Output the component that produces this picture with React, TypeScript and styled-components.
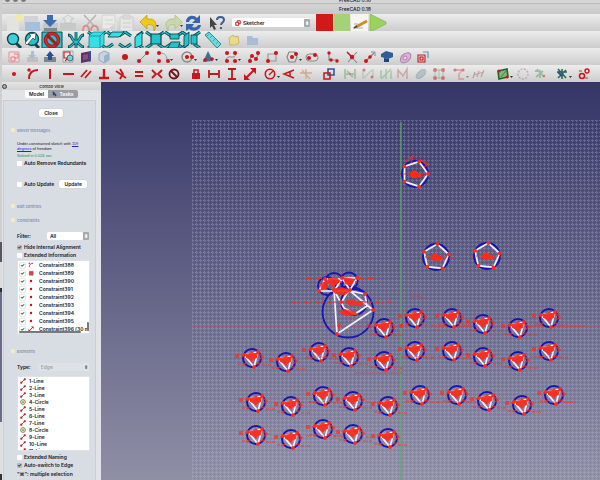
import React from "react";
import styled, { createGlobalStyle } from "styled-components";

const GlobalStyle = createGlobalStyle`
  * { box-sizing: border-box; }
  html, body, #root { height: 100%; margin: 0; }
  body { font-family: Inter, "Liberation Sans", sans-serif; font-size: 5px; font-weight: 600; color: #16181c; overflow: hidden; }
  button, select, input { font: inherit; color: inherit; }
`;

const Desktop = styled.div`
  display: flex;
  height: 100%;
  padding-left: 2px;
  background: linear-gradient(#cfcfcf 0 242px, #55565e 242px 262px, #dcdcdc 262px 288px, #2b2c33 288px 292px, #6a6a8c 292px 422px, #dedede 422px 474px, #333 474px);
`;
const Window = styled.div`
  flex: 1;
  min-width: 0;
  display: flex;
  flex-direction: column;
`;
const BackTitle = styled.div`
  height: 4px;
  display: flex;
  justify-content: center;
  align-items: flex-end;
  position: relative;
  overflow: hidden;
  background: #d6d6d6;
  border-bottom: 1px solid #b9b9b9;
  line-height: 6px;
  padding-left: 108px;
  font-weight: 500;
`;
const Lights = styled.div`
  position: absolute;
  left: 3px;
  top: -3px;
  display: flex;
  gap: 3px;
`;
const Light = styled.span`
  width: 5px;
  height: 5px;
  border-radius: 50%;
  background: #77797b;
`;
const TitleBar = styled.header`
  height: 10px;
  display: flex;
  justify-content: center;
  align-items: center;
  padding-left: 108px;
  background: linear-gradient(#d4d4d4, #c9c9c9);
  font-weight: 500;
`;
const Toolbar = styled.div`
  height: 17px;
  flex: none;
  display: flex;
  align-items: center;
  padding-left: 4px;
  overflow: hidden;
  background: linear-gradient(#ececec, #cdcdcd);
`;
const Tool = styled.button<{ $gap: number; $faded?: boolean }>`
  flex: none;
  width: 16px;
  height: 16px;
  margin: 0 0 0 ${(p) => p.$gap}px;
  padding: 0;
  border: 0;
  background: none;
  opacity: ${(p) => (p.$faded ? 0.5 : 1)};
  svg { display: block; overflow: visible; }
`;
const WorkbenchSelect = styled.label`
  display: flex;
  align-items: center;
  gap: 1px;
  width: 78px;
  height: 9px;
  margin-left: 7px;
  padding-left: 3px;
  background: #fff;
  border-radius: 2px;
  select { padding: 0 1px; }
`;
const Select = styled.select<{ $muted?: boolean }>`
  appearance: none;
  flex: 1;
  min-width: 0;
  height: 8px;
  padding: 0 3px;
  border: 0;
  border-radius: 2px;
  background: ${(p) => (p.$muted ? "#e1e4e8" : "#fff")};
  color: ${(p) => (p.$muted ? "#8b8e93" : "#16181c")};
`;
const Stepper = styled.span<{ $muted?: boolean }>`
  display: flex;
  align-items: center;
  justify-content: center;
  width: 6px;
  height: 8px;
  border-radius: 1px;
  background: ${(p) => (p.$muted ? "#e1e4e8" : "#a5a8ad")};
  color: ${(p) => (p.$muted ? "#777" : "#fff")};
`;
const Body = styled.div`
  flex: 1;
  min-height: 0;
  display: flex;
`;
const Dock = styled.aside`
  width: 99px;
  flex: none;
  display: flex;
  flex-direction: column;
  background: #e1e3e6;
`;
const DockTitle = styled.div`
  height: 8px;
  display: grid;
  grid-template-columns: 7px 1fr 7px;
  align-items: center;
  text-align: center;
  background: linear-gradient(#e4e4e4, #d2d2d2);
  color: #3a3b3e;
  font-size: 4px;
`;
const DockClose = styled.button`
  width: 5px;
  height: 5px;
  padding: 0;
  border: 1px solid #3d3e42;
  border-radius: 50%;
  background: #aaa;
`;
const Tabs = styled.div`
  display: flex;
  justify-content: center;
  height: 10px;
`;
const Tab = styled.button<{ $active?: boolean }>`
  display: flex;
  align-items: center;
  justify-content: center;
  gap: 2px;
  width: ${(p) => (p.$active ? 30 : 23)}px;
  height: 8px;
  padding: 0;
  border: 0;
  border-radius: ${(p) => (p.$active ? "0 2px 2px 0" : "2px 0 0 2px")};
  background: ${(p) => (p.$active ? "#9a9da3" : "#fff")};
  color: ${(p) => (p.$active ? "#fff" : "#16181c")};
`;
const Tasks = styled.section`
  flex: 1;
  min-height: 0;
  margin: 0 5px 0 1px;
  padding: 8px 4px 0 7px;
  border: 1px solid #c9cdd4;
  border-bottom: 0;
  background: #d8dce3;
  overflow: hidden;
`;
const Push = styled.button<{ $wide?: boolean }>`
  display: block;
  width: ${(p) => (p.$wide ? 28 : 24)}px;
  height: 8px;
  padding: 0;
  border: 0;
  border-radius: 2px;
  background: #fff;
  box-shadow: 0 0 1px #aaa;
  line-height: 8px;
`;
const Centered = styled.div`
  display: flex;
  justify-content: center;
`;
const Heading = styled.h2<{ $top: number }>`
  display: flex;
  align-items: center;
  gap: 1px;
  height: 6px;
  margin: ${(p) => p.$top}px 0 0;
  color: #8492b5;
  font-size: 4px;
  font-weight: 600;
  &::before {
    content: "";
    width: 4px;
    height: 4px;
    margin-right: 1px;
    border-radius: 1px;
    background: #f1ecc4;
  }
`;
const Group = styled.div<{ $top: number }>`
  margin: ${(p) => p.$top}px 0 0 6px;
`;
const Message = styled.p`
  margin: 0;
  font-family: "Liberation Sans", sans-serif;
  font-size: 4px;
  font-weight: 400;
  line-height: 5px;
  a { color: #2222e0; }
`;
const Solved = styled(Message)`
  margin-top: 2px;
  color: #239036;
`;
const Line = styled.div<{ $top?: number }>`
  display: flex;
  align-items: center;
  gap: 5px;
  height: 8px;
  margin-top: ${(p) => p.$top ?? 0}px;
`;
const Check = styled.label`
  display: flex;
  align-items: center;
  gap: 2px;
  height: 8px;
  white-space: nowrap;
`;
const Tick = styled.input`
  appearance: none;
  flex: none;
  display: grid;
  place-items: center;
  width: 5px;
  height: 5px;
  margin: 0;
  border-radius: 1px;
  background: #fff;
  &:checked { background: #b5b9bf; }
  &:checked::after { content: "✓"; font-size: 5px; line-height: 5px; }
`;
const ListTick = styled(Tick)`
  &:checked { background: #fff; }
  outline: 1px solid #e4e4e6;
`;
const FieldLabel = styled.label<{ $gap: number }>`
  display: flex;
  align-items: center;
  width: 72px;
  gap: ${(p) => p.$gap}px;
`;
const SelectBox = styled.span`
  flex: 1;
  display: flex;
  min-width: 0;
`;
const List = styled.ul<{ $height: number; $top: number }>`
  position: relative;
  width: 73px;
  height: ${(p) => p.$height}px;
  margin: ${(p) => p.$top}px 0 0;
  padding: 0;
  list-style: none;
  overflow: hidden;
  background: #fff;
  border: 1px solid #e0e1e4;
`;
const ConstraintRow = styled.li`
  display: grid;
  grid-template-columns: 5px 8px 1fr;
  gap: 3px;
  align-items: center;
  height: 8px;
  padding-left: 2px;
  white-space: nowrap;
`;
const ElementRow = styled.li`
  display: flex;
  align-items: center;
  gap: 3px;
  height: 7px;
  padding-left: 2px;
`;
const ScrollThumb = styled.span<{ $vertical?: boolean }>`
  position: absolute;
  border-radius: 1px;
  background: #77797d;
  bottom: ${(p) => (p.$vertical ? 2 : 0)}px;
  ${(p) => (p.$vertical ? "right: 0; width: 2px; height: 9px;" : "left: 1px; width: 62px; height: 2px;")}
`;
const Hint = styled.p`
  margin: 1px 0 0;
  line-height: 8px;
`;
const View = styled.main`
  flex: 1;
  min-width: 0;
  overflow: hidden;
  background: linear-gradient(#353567, #8f8fa6);
  svg { display: block; }
`;

const RED = "#c9151b";
const TEAL = "#22c3cb";
const DARK = "#0b4950";

const Dot = ({ x, y, r = 2 }: { x: number; y: number; r?: number }) => <circle cx={x} cy={y} r={r} fill={RED} />;
const S = ({ d, c = RED, w = 1.6, f = "none" }: { d: string; c?: string; w?: number; f?: string }) => (
  <path d={d} stroke={c} strokeWidth={w} fill={f} />
);
const Cube = ({ face }: { face: number }) => (
  <>
    <S d="M-9 -8L-3 -4M9 -8L3 -4M-9 8L-3 4M9 8L3 4" c={DARK} w={3.2} />
    <S d="M-9 -8L-3 -4M9 -8L3 -4M-9 8L-3 4M9 8L3 4" c={TEAL} w={1.5} />
    {face === 0 && <S d="M-8 -4L-4 -8H7L3 -4V8H-8ZM-8 -4H3L7 -8V4L3 8" c="#128890" w={0.8} f="#35dfe6" />}
    {face === 1 && <S d="M-8 -3L-4 -8H8L3 -3Z" c={DARK} w={0.9} f="#35dfe6" />}
    {face === 2 && <S d="M1 -3L8 -8V5L1 8Z" c={DARK} w={0.9} f="#35dfe6" />}
    {face === 3 && <S d="M-4 -6H6V4H-4Z" c={DARK} w={1.2} f={TEAL} />}
    {face === 4 && <S d="M-6 8L-3 2H6L4 8ZM-4 -6H5V-1H-4Z" c={DARK} w={0.9} f={TEAL} />}
    {face === 5 && <S d="M-7 -4L-2 -8V4L-7 8ZM0 -5H6V4H0Z" c={DARK} w={0.9} f={TEAL} />}
  </>
);

const glyphs: Record<string, React.ReactNode> = {
  new: <><path d="M-7-7H5V8H-7Z" fill="#e3e3e0" /><circle cx="5" cy="-6" r="4" fill="#f1e9a8" /></>,
  open: <><path d="M-8 -7H6V8H-8Z" fill="#d0d3d7" /><path d="M-7 -1H8V8H-7Z" fill="#a5bfdf" /></>,
  save: <><path d="M-7 0H8V8H-7Z" fill="#c3c7c9" /><path d="M-3-8H3V-3H7L0 4L-7-3H-3Z" fill="#3b6db3" /><path d="M-6 5H7V8H-6Z" fill="#7e8b90" /></>,
  print: <><path d="M-8 0H8V7H-8Z" fill="#c7c9c9" /><path d="M-3 0V-4H-6L0-8L6-4H3V0Z" fill="#e4e5e5" stroke="#bbb" strokeWidth=".6" /></>,
  cut: <><S d="M-6-8L4 3M6-8L-4 3" c="#b5b5b5" w={1.5} /><S d="M-7 8C-7 1-1 1-1 8M1 8C1 1 8 1 8 8" c="#d98f8a" w={2} /></>,
  copy: <S d="M-7-8H6V6H-7ZM-4-3H4M-4 1H4M-2 7H8V-2" c="#d3d3d3" w={0.9} f="#eaeae8" />,
  paste: <S d="M-7-6H6V8H-7ZM-4-8H3V-4H-4ZM-4 0H4M-4 4H4" c="#c9c9c9" w={0.9} f="#e6e6e5" />,
  undo: <path d="M-9-1L-2-8V-4C7-5 9 1 5 8C5 2 3 1-2 2V6Z" fill="#edc918" stroke="#ba9a12" strokeWidth=".7" />,
  redo: <path d="M9-1L2-8V-4C-7-5-9 1-5 8C-5 2-3 1 2 2V6Z" fill="#c9d9a5" stroke="#aab88a" strokeWidth=".7" />,
  refresh: <><path d="M-7-1C-7-8 1-9 4-5L7-8V0H-1L2-3C-1-5-3-4-4-1Z" fill="#3566ad" /><path d="M8 2C7 8 0 9-4 6L-7 8V1H1L-1 4C2 5 4 4 5 2Z" fill="#3566ad" /></>,
  help: <><path d="M-7-6L0 2L-3 2L-1 6L-3 7L-5 3L-7 5Z" fill="#444" /><path d="M0-3C0-7 7-7 7-3C7-1 4 0 4 2M4 4V6" fill="none" stroke="#3a5f8d" strokeWidth="2" /></>,
  record: <path d="M-8-9H9V9H-8Z" fill="#d01a1a" />,
  stop: <path d="M-8-9H8V9H-8Z" fill="#a5d278" />,
  edit: <><path d="M-9-9H8V9H-9Z" fill="#f6f5f0" /><S d="M-7 5H3M-6 1H-2" c="#999" w={0.8} /><S d="M-4 4L7-2" c="#c4912e" w={3} /><S d="M-6 5L-3 3" c="#444" w={1.6} /></>,
  play: <path d="M-8-9L8-1V1L-8 9Z" fill="#9ad25e" stroke="#7cae4c" strokeWidth=".6" />,
  zoom: <><S d="M2 3L7 8" c={DARK} w={3} /><circle cx="-1" cy="-1" r="5.5" fill="#3fcfd6" stroke={DARK} strokeWidth="1.4" /></>,
  zoomsel: <><S d="M2 3L7 8" c={DARK} w={3} /><circle cx="0" cy="-1" r="6.5" fill={TEAL} stroke={DARK} strokeWidth="1.4" /><path d="M4-7L3 0L1-2L-5 5L-7 3L-1-4L-3-6Z" fill="#fff" stroke="#222" strokeWidth=".6" /></>,
  drawstyle: <><path d="M-10-8H10V8H-10Z" fill={TEAL} stroke={DARK} /><circle r="6.5" fill="none" stroke="#8e1519" strokeWidth="3.6" /><circle r="6.5" fill="none" stroke="#d3262b" strokeWidth="2.2" /><S d="M-5-5L5 5" c="#a51b20" w={3} /></>,
  iso: <><S d="M0-8V8M-8-5C-3-5-5 1 0 2C5 1 3-5 8-5M-8 7C-4 7-4 3 0 2C4 3 4 7 8 7" c={DARK} w={2.8} /><S d="M0-8V8M-7-5C-3-5-5 1 0 2C5 1 3-5 7-5M-7 7C-4 7-4 3 0 2C4 3 4 7 7 7" c={TEAL} w={1.2} /></>,
  c0: <Cube face={0} />, c1: <Cube face={1} />, c2: <Cube face={2} />, c3: <Cube face={3} />, c4: <Cube face={4} />, c5: <Cube face={5} />,
  ruler: <><path d="M-8-5L-4-8L8 4L4 8Z" fill="#70d8de" stroke="#2a8b90" strokeWidth="1" /><S d="M-4-6L-6-4M-1-4L-3-2M2-1L0 1M5 2L3 4" c="#2a8b90" w={0.7} /></>,
  part: <path d="M-5-2L-1-5L1-3L4-4L5 3L1 5L-4 5Z" fill="#eadc87" stroke="#c9b75d" strokeWidth="1" />,
  folder: <path d="M-5-4H0L1-2H6V5H-5Z" fill="#a9bdd6" />,
  sketch: <><path d="M-5-5H5V5H-5Z" fill="#f0dcdc" stroke="#d99" /><S d="M-3 0H1V4H-3ZM0-3H4V1H0" c="#d98589" w={1} /></>,
  leave: <><path d="M-5 0H6V5H-5Z" fill="#a7abb0" /><path d="M-1-6H2V-2H4L0 2L-4-2H-1Z" fill="#7d9ab5" /></>,
  up: <><path d="M-6 0H6V5H-6Z" fill="#7f858d" /><path d="M-2 3V-1H-4L0-6L4-1H2V3Z" fill="#26508f" /></>,
  view: <><path d="M-5-6H5V5H-5Z" fill="#eee" stroke="#888" strokeWidth=".7" /><S d="M-4-5H2V1H-4ZM0 1L-3 4" w={1.1} /><circle cx="2" cy="1" r="3" fill="#83cbd2" stroke="#1e7e86" /></>,
  section: <><path d="M-5-4L5-6V4L-5 6Z" fill="#5a3270" /><path d="M-3-2L2-3V2L-3 3Z" fill="#8f4c74" /><path d="M3-5L5-6V4L3 5Z" fill="#304f91" /></>,
  map: <><path d="M-5-3L0-6L5-4V3L0 6L-5 3Z" fill="#c8d4e2" stroke="#8a9cb0" strokeWidth=".8" /><path d="M0-1L5-4V3L0 6Z" fill="#9ab2cd" /></>,
  point: <Dot x={0} y={0} r={3} />,
  line: <><S d="M-4 4L4-4" c="#888" w={1} /><Dot x={-4} y={4} /><Dot x={4} y={-4} /></>,
  arc: <><S d="M-3-4C3-4 4 0 4 4" c="#999" w={1} /><Dot x={-4} y={-4} /><Dot x={-4} y={4} /><Dot x={5} y={4} /></>,
  circle: <><circle r="5" fill="none" stroke="#888" strokeWidth="1.4" /><Dot x={0} y={0} /><Dot x={5} y={0} /></>,
  cone: <><path d="M0-6L5 4L-5 5Z" fill="#41718e" /><Dot x={-3} y={3} r={1.8} /><Dot x={4} y={2} r={1.8} /></>,
  bspline: <><S d="M-5 4C-4-5 4 5 5-4" c="#888" w={1} /><Dot x={-4} y={-4} /><Dot x={4} y={-4} /><Dot x={-4} y={4} /><Dot x={4} y={4} /></>,
  poly: <><S d="M-5 4L-2-2L2 2L5-4" c="#888" w={1} /><Dot x={-4} y={4} /><Dot x={-2} y={-1} /><Dot x={2} y={2} /><Dot x={4} y={-4} /></>,
  rect: <><S d="M-4-3H4V4H-4Z" c="#999" w={1.2} /><Dot x={-4} y={4} /><Dot x={4} y={-4} /></>,
  hexagon: <><S d="M-5 0L-3-5H3L5 0L3 5H-3Z" c="#888" w={1.2} /><Dot x={0} y={0} /><Dot x={4} y={-3} /></>,
  slot: <><rect x="-6" y="-3" width="12" height="7" rx="3.5" fill="#ddd" stroke="#888" /><Dot x={-3} y={1} /><Dot x={3} y={-2} /></>,
  fillet: <><S d="M-4-5V3H5" c="#888" w={1.2} /><Dot x={-4} y={-4} r={1.7} /><Dot x={-2} y={3} r={1.8} /><Dot x={4} y={4} r={1.7} /></>,
  trim: <><S d="M-5-5L5 6M5-5L-4 5" c="#888" w={1.1} /><S d="M-5-5L0 0" w={1.4} /><Dot x={0} y={0} r={2.2} /></>,
  extend: <><S d="M-4 4L4-4" c="#888" w={1.2} /><S d="M1-5H5V-1" c="#888" w={1} /><Dot x={-4} y={4} /><Dot x={0} y={0} r={1.8} /></>,
  external: <><path d="M-6-3L-1-6L6-4V0L1 2L-6 0Z" fill="#315e9b" /><path d="M-3 1V5H2V2" fill="#204573" /></>,
  carbon: <><ellipse cx="0" cy="1" rx="6" ry="4" transform="rotate(-40)" fill="#d9b2d5" stroke="#b37caf" strokeWidth="1" /><circle cx="0" cy="1" r="2" fill="#e8d0e5" stroke="#b37caf" /></>,
  construct: <><S d="M-5-2H2V5H-5ZM-3 0H0V3H-3Z" w={1.1} /><S d="M0-5H5V1" c="#6697b5" w={1.2} /></>,
  coinc: <Dot x={0} y={0} r={2} />,
  onobj: <><S d="M-4 5C-4-1-1-4 5-4" w={2} /><Dot x={-4} y={-4} r={1.7} /></>,
  vert: <S d="M0-5V5" w={2} />, horiz: <S d="M-5 0H6" w={2} />,
  par: <S d="M-5 3L1-4M-1 4L5-3" w={1.8} />, perp: <S d="M0-5V4M-5 4H5" w={2.4} />,
  tang: <S d="M-5-3L5 4M-1-5L2 0L-1 5" w={1.9} />, equal: <S d="M-4-2H4M-4 2H4" w={1.9} />,
  symm: <S d="M-5-4L-1 0L-5 4M5-4L1 0L5 4" w={1.9} />,
  block: <><circle r="4.5" fill="none" stroke="#6e1216" strokeWidth="1.8" /><S d="M-3-3L3 3" c="#6e1216" w={1.8} /></>,
  lock: <><path d="M-4-1H4V5H-4Z" fill={RED} /><S d="M-2 0V-4H2V0" w={1.5} /></>,
  hdist: <S d="M-5-4V4M5-4V4M-5 0H5" w={1.8} />, vdist: <S d="M-4-5H4M-4 5H4M0-5V5" w={1.8} />,
  dist: <><S d="M-4 4L4-4" w={2} /><path d="M-6 6V0L0 6ZM6-6V0L0-6Z" fill={RED} /></>,
  radius: <><circle r="4.7" fill="none" stroke={RED} strokeWidth="1.6" /><S d="M-1 1L3-3" w={1.4} /></>,
  angle: <S d="M5-4L-5 0L5 4M1-3V3" w={1.5} />,
  snell: <S d="M-6-1H6M0-5V5M-4-4L4 5" c="#d0aa8c" w={1.3} />,
  toggle: <><path d="M-1-5H5V1H-1Z" fill="none" stroke="#2d579e" strokeWidth="1.6" /><path d="M-5-1H1V5H-5Z" fill="none" stroke={RED} strokeWidth="1.5" /></>,
  g1: <><S d="M-5-5V5M5-5V5M-4 0H4M-3-3L3 3" c="#6fa86b" w={1.8} /><Dot x={0} y={0} r={1} /></>,
  g2: <><S d="M-5-4V5M5-5V3M-4 4L4-4" c="#96ba91" w={1.4} /><Dot x={-4} y={-4} r={1.5} /><Dot x={4} y={3} r={1.5} /></>,
  g3: <S d="M-5 5L5-5M-5-4V4M0-5V5M5-3V5" c="#79b277" w={1.6} />,
  g4: <S d="M-5 4V-4L0 2L4-5V5" c="#b87268" w={1.5} />,
  g5: <ellipse rx="3" ry="6" transform="rotate(48)" fill="#8aa5be" stroke="#708ba1" />,
  g6: <><S d="M-4-4H4V4H-4ZM0-5V5" c="#6ba56b" w={1} /><Dot x={-4} y={-4} /><Dot x={4} y={-4} /><Dot x={-4} y={4} /><Dot x={4} y={4} /></>,
  g7: <><S d="M-5-4H3L0 0V5H5" c="#d9797b" w={1.8} /><Dot x={-4} y={-4} r={1.6} /><Dot x={4} y={-4} r={1.6} /></>,
  g8: <S d="M-6 4L-4-2M-2 3L0-3M2 3L5-4M-5 1L5-2" c="#a76d68" w={1.3} />,
  plane: <><path d="M-5-3L4-5L5 3L-4 5Z" fill="#7dbd68" stroke="#286227" strokeWidth="1.6" /><Dot x={-4} y={-3} r={1.5} /><Dot x={4} y={3} r={1.5} /><S d="M-2 3L3-3" c="#456eb3" w={1} /></>,
  ring: <circle r="5" fill="none" stroke="#a98286" strokeWidth="1.6" strokeDasharray="2 1.4" />,
  tree: <><S d="M-5-3H0V4M-3-5L4 3M-4 3L3-3" c="#5e9d67" w={1.8} /><Dot x={4} y={2} r={1.2} /></>,
  tree2: <><S d="M-5-2H5M0-5V5M-4-5L4 4M-4 4L4-4" c="#286f52" w={1.6} /><S d="M-4-2L0 2" c="#2d4d96" w={2} /></>,
  swap: <><circle cx="-2" cy="2" r="2.5" fill="none" stroke={RED} strokeWidth="1.6" /><circle cx="3" cy="-3" r="2" fill="none" stroke={RED} strokeWidth="1.4" /><S d="M1 4H4M-5-3H-2" c="#c76b6e" w={1.5} /></>,
};

type Item = [kind: string, gap: number, flags?: string];
const files: Item[] = [["new", 0], ["open", 2], ["save", 2], ["print", 2], ["cut", 6], ["copy", 3], ["paste", 2], ["undo", 6, "m"], ["redo", 8, "m"], ["refresh", 4], ["help", 8]];
const macros: Item[] = [["record", 6], ["stop", 2], ["edit", 2], ["play", 2]];
const views: Item[] = [["zoom", 0], ["zoomsel", 2], ["drawstyle", 4], ["iso", 8], ["c0", 5], ["c1", 3], ["c2", 2], ["c3", 5], ["c4", 3], ["c5", 1], ["ruler", 6], ["part", 5], ["folder", 2]];
const geometry: Item[] = [["sketch", 0], ["leave", 2, "f"], ["up", 2], ["view", 2], ["section", 2], ["map", 2], ["point", 5], ["line", 2], ["arc", 4, "m"], ["circle", 8, "m"], ["cone", 5, "m"], ["bspline", 7, "m"], ["poly", 7], ["rect", 2], ["hexagon", 4, "m"], ["slot", 4], ["fillet", 5], ["trim", 3], ["extend", 2], ["external", 1], ["carbon", 2], ["construct", 2]];
const constraints: Item[] = [["coinc", 0], ["onobj", 3], ["vert", 1], ["horiz", 2], ["par", 2], ["perp", 2], ["tang", 1], ["equal", 2], ["symm", 2], ["block", 1], ["lock", 6], ["hdist", 2], ["vdist", 2], ["dist", 2], ["radius", 4, "m"], ["angle", 3], ["snell", 1], ["toggle", 7], ["g1", 5, "f"], ["g2", 2, "f"], ["g3", 2, "f"], ["g4", 1, "f"], ["g5", 2, "f"], ["g6", 2, "f"], ["g7", 4, "mf"], ["g8", 4, "f"], ["plane", 8, "m"], ["ring", 4, "f"], ["tree", 1, "f"], ["tree2", 6, "m"], ["swap", 6]];

const Tools = ({ items }: { items: Item[] }) => (
  <>
    {items.map(([kind, gap, flags = ""]) => (
      <Tool key={kind} type="button" aria-label={kind} $gap={gap} $faded={flags.includes("f")}>
        <svg width="16" height="16" viewBox="-8 -8 16 16">
          {glyphs[kind]}
          {flags.includes("m") && <path d="M7 2H10L8.500 4Z" fill="#333" />}
        </svg>
      </Tool>
    ))}
  </>
);

const SmallIcon = ({ kind }: { kind: string }) => (
  <svg width="6" height="6" viewBox="-7 -7 14 14">
    {kind === "Line" && <><S d="M-5 5L5-5" c="#555" w={2} /><Dot x={-4} y={4} r={2.6} /><Dot x={4} y={-4} r={2.6} /></>}
    {kind === "Circle" && <><circle r="5.500" fill="#f4f4d4" stroke="#63772b" strokeWidth="2" /><circle r="2" fill="#63772b" /></>}
    {kind === "group" && <path d="M-4-4H5V5H-4ZM-4-1H5M-4 2H5" fill="#e0666a" stroke="#a5161a" />}
    {kind === "coinc" && <Dot x={0} y={0} r={2.8} />}
    {["onobj", "dist"].includes(kind) && glyphs[kind]}
  </svg>
);

const triangles = [
  [384, 328], [415, 318], [452, 318], [483, 324], [518, 328], [549, 318],
  [252, 358], [286, 362], [319, 352], [349, 357], [384, 361], [415, 351], [452, 351], [483, 357], [518, 361], [549, 351],
  [256, 402], [291, 406], [323, 396], [353, 401], [388, 406], [420, 395], [457, 395], [487, 401], [522, 405], [554, 395],
  [256, 435], [291, 439], [323, 429], [353, 434], [388, 438],
];
const SKETCH = "#ff2a1a";

const TriangleCell = ({ x, y }: { x: number; y: number }) => (
  <g transform={`translate(${x} ${y})`}>
    <path d="M10 7H20M-14 6H-9" stroke={SKETCH} strokeWidth="1.500" strokeDasharray="3 1 1 1" opacity=".5" />
    <circle r="9" fill="none" stroke="#1515b0" strokeWidth="1.900" />
    <path d="M-8-3L6-6L2 9Z" fill="none" stroke="#f3efff" strokeWidth="1.600" />
    <path d="M-17-3H-13M-17-1H-13" stroke={SKETCH} strokeWidth="1.400" opacity=".85" />
    <path d="M-6-4L-2-5L0-7L2-5L6-5L5 0L2 1L0 4L-3 1L-6 0Z" fill={SKETCH} opacity=".92" />
    <path d="M-11-2L-6-3M7-4L11-1L8 1M-6 5L-9 7M4 6L9 5" stroke={SKETCH} strokeWidth="1.700" opacity=".75" fill="none" />
    <g fill={SKETCH}><circle cx="-8" cy="-3" r="1.900" /><circle cx="6" cy="-6" r="1.900" /><circle cx="2" cy="9" r="1.900" /></g>
  </g>
);

const pentagonPoints = (r: number, turn: number) =>
  Array.from({ length: 5 }, (_, i) => {
    const a = ((i * 72 + turn) * Math.PI) / 180;
    return [Math.round(r * Math.cos(a) * 10) / 10, Math.round(r * Math.sin(a) * 10) / 10];
  });

const Pentagon = ({ x, y, turn }: { x: number; y: number; turn: number }) => {
  const points = pentagonPoints(13, turn);
  return (
    <g transform={`translate(${x} ${y})`}>
      <circle r="13" fill="none" stroke="#1515b0" strokeWidth="1.900" />
      <polygon points={points.join(" ")} fill="none" stroke="#f1eeff" strokeWidth="1.700" />
      <path d="M-6 0L-3-3L0-4L3-1H6L7 3L0 4L-4 3Z" fill={SKETCH} />
      <path d="M-11 0H11M-16 0H-13M13 1H17" stroke={SKETCH} strokeWidth="1.500" strokeDasharray="2 1" opacity=".6" />
      {points.map(([px, py]) => <circle key={`${px} ${py}`} cx={px} cy={py} r="1.900" fill={SKETCH} />)}
    </g>
  );
};

const Sketch = () => (
  <svg width="100%" height="100%" role="img" aria-label="Sketch view">
    <defs>
      <pattern id="grid" width="4" height="4" patternUnits="userSpaceOnUse">
        <path d="M0 .5H4M.5 0V4" stroke="#c7c7e6" strokeWidth="1" strokeDasharray="2 1" opacity=".27" />
      </pattern>
    </defs>
    <g transform="translate(-101 -82)">
      <rect x="192" y="120" width="2400" height="2400" fill="url(#grid)" />
      <path d="M192 326H2400" stroke="#d04c68" opacity=".6" />
      <path d="M401 122V2400" stroke="#5aa86a" strokeWidth="1.200" />
      <Pentagon x={415} y={174} turn={0} />
      <path d="M405 162L413 156L411 163M420 160L428 164L424 167" stroke={SKETCH} fill="none" strokeWidth="1.500" opacity=".75" />
      <Pentagon x={436} y={257} turn={-84} />
      <Pentagon x={487} y={256} turn={-84} />
      <g fill="none" stroke="#1717b5" strokeWidth="1.800">
        <circle cx="348" cy="312" r="25.500" />
        <circle cx="334" cy="282" r="9" /><circle cx="349" cy="281" r="8.500" /><circle cx="327" cy="286" r="9" />
        <circle cx="354" cy="302" r="13" />
      </g>
      <path d="M334 290L337 334L373 310M334 290L341 303L349 290L373 310M319 291L325 279H342L334 291ZM342 278H357L350 290ZM318 291H350L365 294L367 306L355 314L344 308L341 302" fill="none" stroke="#f3efff" strokeWidth="1.700" />
      <path d="M305 278H325M357 278H376M325 282H357" stroke={SKETCH} strokeWidth="2" strokeDasharray="4 1 2 3" opacity=".75" />
      <path d="M292 302H394" stroke={SKETCH} strokeWidth="2" strokeDasharray="3 3 2 4" opacity=".6" />
      <path d="M328 278L337 277L340 282L333 287L328 283ZM343 277L355 279L351 286L345 284ZM332 289L341 287L352 290L345 295L335 294ZM345 301L352 299L355 301L364 301L362 306L350 306ZM338 312L344 309L354 311L359 315L346 316ZM320 283L326 281L329 288L321 290ZM337 325L341 323L339 330Z" fill={SKETCH} opacity=".9" />
      <g fill={SKETCH}>
        {[[319, 291], [325, 279], [342, 278], [357, 278], [334, 290], [350, 290], [365, 294], [373, 310], [337, 334], [341, 302], [401, 326]].map(([x, y]) => <circle key={`${x}-${y}`} cx={x} cy={y} r="2" />)}
      </g>
      <path d="M411 296H416L425 298M433 330H440M434 326H470M530 326H586M355 373H402" stroke={SKETCH} strokeWidth="1.500" strokeDasharray="3 1" fill="none" opacity=".45" />
      {triangles.map(([x, y]) => <TriangleCell key={`${x}-${y}`} x={x} y={y} />)}
      <path d="M404 402H433M438 402H471M531 402H579M301 402H346M366 402H382M306 436H344M366 437H380M403 357H438M531 357H568M306 357H338" stroke={SKETCH} strokeWidth="1.500" strokeDasharray="3 1 1 2" opacity=".4" />
    </g>
  </svg>
);

const constraintIcons = ["onobj", "group", "coinc", "coinc", "coinc", "coinc", "coinc", "coinc", "dist", "coinc"];

export default function App() {
  return (
    <>
      <GlobalStyle />
      <Desktop>
        <Window>
          <BackTitle><Lights><Light /><Light /><Light /></Lights>FreeCAD 0.18</BackTitle>
          <TitleBar>FreeCAD 0.18</TitleBar>
          <Toolbar>
            <Tools items={files} />
            <WorkbenchSelect>
              <svg width="6" height="6" viewBox="0 0 8 8"><path d="M1 3H5V7H1ZM3 3V1H7V5H5" fill="none" stroke={RED} strokeWidth="1.300" /></svg>
              <Select aria-label="Workbench"><option>Sketcher</option></Select>
              <Stepper>⬍</Stepper>
            </WorkbenchSelect>
            <Tools items={macros} />
          </Toolbar>
          <Toolbar><Tools items={views} /></Toolbar>
          <Toolbar><Tools items={geometry} /></Toolbar>
          <Toolbar><Tools items={constraints} /></Toolbar>
          <Body>
            <Dock>
              <DockTitle><DockClose aria-label="Close panel" />Combo View</DockTitle>
              <Tabs>
                <Tab type="button">Model</Tab>
                <Tab type="button" $active>
                  <svg width="5" height="6" viewBox="0 0 5 6"><path d="M1 1L4 5M1 4L3 2" stroke="#274a70" strokeWidth="1.500" /></svg>
                  Tasks
                </Tab>
              </Tabs>
              <Tasks>
                <Centered><Push type="button">Close</Push></Centered>
                <Heading $top={10}>Solver messages</Heading>
                <Group $top={8}>
                  <Message>Under-constrained sketch with <a href="#dof">119<br />degrees</a> of freedom</Message>
                  <Solved>Solved in 0.024 sec</Solved>
                  <Line $top={1}><Check><Tick type="checkbox" />Auto Remove Redundants</Check></Line>
                  <Line $top={13}><Check><Tick type="checkbox" />Auto Update</Check><Push type="button" $wide>Update</Push></Line>
                </Group>
                <Heading $top={15}>Edit controls</Heading>
                <Heading $top={8}>Constraints</Heading>
                <Group $top={9}>
                  <FieldLabel $gap={16}>Filter:<SelectBox><Select defaultValue="All"><option>All</option></Select><Stepper>⬍</Stepper></SelectBox></FieldLabel>
                  <Line $top={3}><Check><Tick type="checkbox" defaultChecked />Hide Internal Alignment</Check></Line>
                  <Line><Check><Tick type="checkbox" />Extended Information</Check></Line>
                  <List $height={74} $top={1}>
                    {constraintIcons.map((kind, i) => (
                      <ConstraintRow key={i}>
                        <ListTick type="checkbox" defaultChecked aria-label={`Constraint${388 + i}`} />
                        <SmallIcon kind={kind} />
                        <span>Constraint{388 + i}{i === 8 && " (30 mm)"}</span>
                      </ConstraintRow>
                    ))}
                    <ScrollThumb /><ScrollThumb $vertical />
                  </List>
                </Group>
                <Heading $top={14}>Elements</Heading>
                <Group $top={9}>
                  <FieldLabel $gap={7}>Type:<SelectBox><Select $muted disabled><option>Edge</option></Select><Stepper $muted>⬍</Stepper></SelectBox></FieldLabel>
                  <List $height={75} $top={5}>
                    {Array.from({ length: 11 }, (_, i) => {
                      const kind = i === 3 || i === 7 ? "Circle" : "Line";
                      return <ElementRow key={i}><SmallIcon kind={kind} />{i + 1}-{kind}</ElementRow>;
                    })}
                  </List>
                  <Line $top={2}><Check><Tick type="checkbox" />Extended Naming</Check></Line>
                  <Line><Check><Tick type="checkbox" defaultChecked />Auto-switch to Edge</Check></Line>
                  <Hint>"⌘": multiple selection</Hint>
                </Group>
              </Tasks>
            </Dock>
            <View><Sketch /></View>
          </Body>
        </Window>
      </Desktop>
    </>
  );
}
